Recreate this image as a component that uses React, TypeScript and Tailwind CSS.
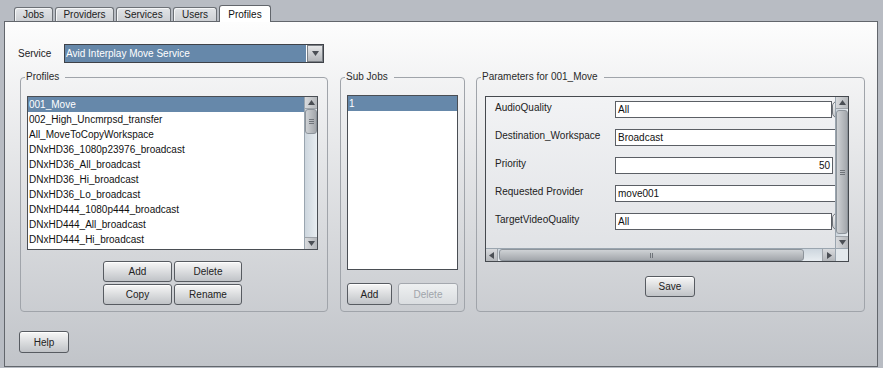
import React from 'react';
import clsx from 'clsx';

const profiles = [
  '001_Move',
  '002_High_Uncmrpsd_transfer',
  'All_MoveToCopyWorkspace',
  'DNxHD36_1080p23976_broadcast',
  'DNxHD36_All_broadcast',
  'DNxHD36_Hi_broadcast',
  'DNxHD36_Lo_broadcast',
  'DNxHD444_1080p444_broadcast',
  'DNxHD444_All_broadcast',
  'DNxHD444_Hi_broadcast',
  'DNxHD444_Lo_broadcast',
];

const tabs = [
  { name: 'Jobs', w: 'w-[39px]' },
  { name: 'Providers', w: 'w-[59px]' },
  { name: 'Services', w: 'w-[55px]' },
  { name: 'Users', w: 'w-[44px]' },
  { name: 'Profiles', w: 'w-[52px]' },
];

type Dir = 'up' | 'down' | 'left' | 'right';

function Arrow({ dir }: { dir: Dir }) {
  const pts = { up: '0,5 3.5,0 7,5', down: '0,0 3.5,5 7,0', left: '5,0 0,3.5 5,7', right: '0,0 5,3.5 0,7' }[dir];
  const vertical = dir === 'up' || dir === 'down';
  return (
    <svg width={vertical ? 7 : 5} height={vertical ? 5 : 7} viewBox={vertical ? '0 0 7 5' : '0 0 5 7'}>
      <polygon points={pts} fill="#4b4f55" />
    </svg>
  );
}

function Btn({ children, className, disabled }: { children: React.ReactNode; className?: string; disabled?: boolean }) {
  return (
    <button
      type="button"
      className={clsx(
        'flex items-center justify-center rounded-[3px] border text-[10px]',
        disabled
          ? 'border-[#a4a8ae] bg-linear-to-b from-[#eef0f1] to-[#dadde0] text-[#a0a4aa]'
          : 'border-[#575b61] bg-linear-to-b from-[#f7f7f7] to-[#c0c3c7] text-[#222] shadow-[inset_0_1px_0_#ffffff]',
        className
      )}
    >
      {children}
    </button>
  );
}

function VScroll({ thumb }: { thumb: string }) {
  return (
    <div className="flex w-[13px] flex-col border-l border-[#9aa5af] bg-linear-to-r from-[#cdd6de] to-[#e8edf1]">
      <div className="flex h-[12px] items-center justify-center border-b border-[#9ea3a9] bg-linear-to-r from-[#d8dadd] to-[#b4b7bb]">
        <Arrow dir="up" />
      </div>
      <div className="flex flex-1 flex-col">
        <div className={clsx('flex flex-col items-center justify-center gap-[1px] rounded-[3px] border border-[#8d949b] bg-linear-to-r from-[#cfd2d5] to-[#a3a7ac]', thumb)}>
          <div className="h-px w-[5px] bg-[#6f747a]" />
          <div className="h-px w-[5px] bg-[#6f747a]" />
          <div className="h-px w-[5px] bg-[#6f747a]" />
        </div>
      </div>
      <div className="flex h-[12px] items-center justify-center border-t border-[#9ea3a9] bg-linear-to-r from-[#d8dadd] to-[#b4b7bb]">
        <Arrow dir="down" />
      </div>
    </div>
  );
}

function HScroll() {
  return (
    <div className="flex h-[13px] border-t border-[#9aa5af] bg-linear-to-b from-[#cdd6de] to-[#e8edf1]">
      <div className="flex w-[12px] items-center justify-center border-r border-[#9ea3a9] bg-linear-to-b from-[#d8dadd] to-[#b4b7bb]">
        <Arrow dir="left" />
      </div>
      <div className="ml-[1px] flex w-[305px] items-center justify-center gap-[1px] rounded-[3px] border border-[#8d949b] bg-linear-to-b from-[#cfd2d5] to-[#a3a7ac]">
        <div className="h-[5px] w-px bg-[#6f747a]" />
        <div className="h-[5px] w-px bg-[#6f747a]" />
      </div>
      <div className="flex-1" />
      <div className="flex w-[13px] items-center justify-center border-l border-[#9ea3a9] bg-linear-to-b from-[#d8dadd] to-[#b4b7bb]">
        <Arrow dir="right" />
      </div>
    </div>
  );
}

function Group({ title, className, children }: { title: string; className?: string; children: React.ReactNode }) {
  return (
    <fieldset className={clsx('h-[241px] rounded-[4px] border border-[#a0a4aa]', className)}>
      <legend className="ml-[4px] pl-[1px] pr-[6px] text-[10px] leading-[12px] text-[#2a2a2a]">{title}</legend>
      {children}
    </fieldset>
  );
}

function Field({ value, right, className, children }: { value: string; right?: boolean; className: string; children?: React.ReactNode }) {
  return (
    <div className="flex shrink-0">
      <div className={clsx('h-[17px] shrink-0 border border-[#5b5f65] bg-white px-[2px] leading-[15px] text-[#111]', right && 'text-right', className)}>
        {value}
      </div>
      {children}
    </div>
  );
}

function ComboStub() {
  return <div className="h-[17px] w-[12px] shrink-0 rounded-l-[5px] border border-[#70757b] bg-linear-to-b from-[#f3f3f3] to-[#c4c7cb]" />;
}

const params: { label: string; field: React.ReactNode }[] = [
  { label: 'AudioQuality', field: <Field value="All" className="w-[217px]"><ComboStub /></Field> },
  { label: 'Destination_Workspace', field: <Field value="Broadcast" className="w-[260px]" /> },
  { label: 'Priority', field: <Field value="50" right className="w-[218px]" /> },
  { label: 'Requested Provider', field: <Field value="move001" className="w-[260px]" /> },
  { label: 'TargetVideoQuality', field: <Field value="All" className="w-[217px]"><ComboStub /></Field> },
];

export default function App() {
  return (
    <div className="h-[368px] w-[883px] overflow-hidden bg-[#b8bcc3] pl-[4px] pt-[5px] font-['Liberation_Sans',Arial,sans-serif] text-[10px] text-[#222]">
      <div className="flex h-[16px] items-end gap-[2px] pl-[10px]">
        {tabs.map((t) =>
          t.name === 'Profiles' ? (
            <div
              key={t.name}
              className={clsx('relative z-10 -mb-px flex h-[17px] items-center justify-center rounded-t-[3px] border border-b-0 border-[#62666c] bg-white text-[#111]', t.w)}
            >
              {t.name}
            </div>
          ) : (
            <div
              key={t.name}
              className={clsx('flex h-[14px] items-center justify-center rounded-t-[3px] border border-b-0 border-[#6c7076] bg-linear-to-b from-[#e2e4e7] to-[#cdd0d4] text-[#222] shadow-[inset_1px_1px_0_#f4f5f6]', t.w)}
            >
              {t.name}
            </div>
          )
        )}
      </div>

      <div className="flex h-[346px] w-[874px] flex-col border border-[#62666c] bg-linear-to-b from-[#fdfdfd] to-[#c1c4c9]">
        <div className="mt-[22px] flex h-[19px] items-center pl-[13px]">
          <span className="w-[46px]">Service</span>
          <div className="flex h-[19px] w-[260px] border border-[#3f4248] bg-white">
            <div className="flex-1 bg-[#6688aa] pl-[1px] leading-[17px] text-white">Avid Interplay Move Service</div>
            <div className="ml-px flex w-[16px] items-center justify-center border border-[#7b8086] bg-linear-to-b from-[#e6e7e9] to-[#b3b6ba]">
              <Arrow dir="down" />
            </div>
          </div>
        </div>

        <div className="mt-[8px] flex pl-[15px]">
          <Group title="Profiles" className="w-[308px]">
            <div className="pl-[6px] pt-[13px]">
              <div className="flex h-[154px] w-[291px] border border-[#4a4e54] bg-white">
                <div className="flex-1 overflow-hidden">
                  {profiles.map((p, i) => (
                    <div
                      key={p}
                      className={clsx('h-[15px] pl-[1px] leading-[15px] whitespace-nowrap', i === 0 ? 'bg-[#6688aa] text-white' : 'text-[#111]')}
                    >
                      {p}
                    </div>
                  ))}
                </div>
                <VScroll thumb="h-[25px]" />
              </div>
              <div className="ml-[76px] mt-[11px] grid grid-cols-[69px_68px] grid-rows-[21px_21px] gap-x-[2px] gap-y-[2px]">
                <Btn>Add</Btn>
                <Btn>Delete</Btn>
                <Btn>Copy</Btn>
                <Btn>Rename</Btn>
              </div>
            </div>
          </Group>

          <Group title="Sub Jobs" className="ml-[12px] w-[125px]">
            <div className="pl-[6px] pt-[12px]">
              <div className="h-[175px] w-[111px] border border-[#4a4e54] bg-white">
                <div className="h-[15px] bg-[#6688aa] pl-[1px] leading-[15px] text-white">1</div>
              </div>
              <div className="mt-[13px] flex gap-[6px]">
                <Btn className="h-[22px] w-[45px]">Add</Btn>
                <Btn disabled className="h-[22px] w-[60px]">Delete</Btn>
              </div>
            </div>
          </Group>

          <Group title="Parameters for 001_Move" className="ml-[11px] w-[389px]">
            <div className="pl-[8px] pt-[13px]">
              <div className="grid h-[166px] w-[364px] grid-cols-[349px_13px] grid-rows-[151px_13px] border border-[#45494e]">
                <div className="flex flex-col gap-[11px] overflow-hidden bg-linear-to-b from-[#f2f3f5] to-[#e1e3e6] pt-[4px]">
                  {params.map((r) => (
                    <div key={r.label} className="flex h-[17px] shrink-0">
                      <div className="w-[129px] shrink-0 pl-[9px] leading-[13px] whitespace-nowrap text-[#222]">{r.label}</div>
                      {r.field}
                    </div>
                  ))}
                </div>
                <VScroll thumb="mt-[1px] h-[124px]" />
                <HScroll />
                <div className="border-l border-t border-[#9aa5af] bg-[#e3e8ec]" />
              </div>
              <Btn className="ml-[160px] mt-[14px] h-[21px] w-[50px]">Save</Btn>
            </div>
          </Group>
        </div>

        <Btn className="ml-[14px] mt-[19px] h-[22px] w-[50px]">Help</Btn>
      </div>
    </div>
  );
}
